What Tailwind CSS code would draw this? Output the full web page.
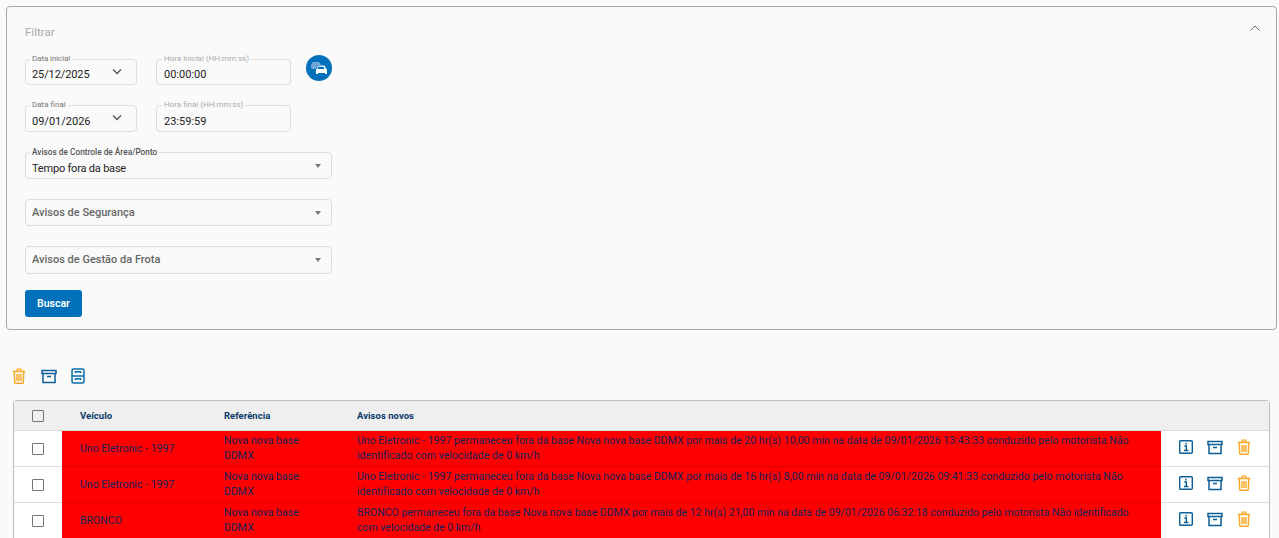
<!DOCTYPE html>
<html lang="pt-BR">
  <head>
    <meta charset="UTF-8" />
    <meta name="viewport" content="width=device-width, initial-scale=1.0" />
    <title>Avisos</title>
    <script src="https://cdn.jsdelivr.net/npm/@tailwindcss/browser@4"></script>
  </head>
  <body class="bg-[#fafafa] font-['Roboto',sans-serif]">
    <div class="h-[538px] overflow-hidden px-[6px] pt-[6px]">
      <!-- filtro -->
      <section class="relative w-[1271px] h-[324px] rounded-[4px] border border-[#a8a8a8] pl-[18px] pt-[18px]">
        <div class="h-[14px] mb-[20px] text-[11.5px] leading-[14px] text-[#a9a9a9]">Filtrar</div>
        <svg class="absolute right-[15px] top-[16px] w-[12px] h-[10px]" viewBox="0 0 12 10" fill="none" stroke="#666" stroke-width="1"><path d="M1.500 7.500 6 3l4.500 4.500" /></svg>

        <div class="flex mb-[20px]">
          <div class="relative flex items-center justify-between w-[112px] h-[26px] rounded-[4px] border border-[#dcdcdc] pl-[6px] pr-[14px] pt-[7px] text-[11px] tracking-[-0.1px] text-[#222]">
            <span class="absolute left-[4px] -top-[6px] bg-[#fafafa] px-[2px] text-[8px] leading-[10px] text-[#777]">Data inicial</span>
            <span>25/12/2025</span>
            <svg class="w-[10px] h-[7px] -mt-[9px]" viewBox="0 0 10 7" fill="none" stroke="#555" stroke-width="1.300"><path d="m1 1.500 4 4 4-4" /></svg>
          </div>
          <div class="relative flex items-center w-[135px] h-[26px] ml-[19px] rounded-[4px] border border-[#dcdcdc] pl-[7px] pt-[7px] text-[11px] text-[#222]">
            <span class="absolute left-[5px] -top-[6px] bg-[#fafafa] px-[2px] text-[8px] leading-[10px] text-[#aaa]">Hora inicial (HH:mm:ss)</span>
            <span>00:00:00</span>
          </div>
          <button class="flex items-center justify-center w-[26px] h-[26px] ml-[15px] -mt-[4px] rounded-full bg-[#0070bb]">
            <svg class="w-[18px] h-[14px]" viewBox="0 0 18 14">
              <path fill="#6fa8d6" d="M3 1h5.500c.8 0 1.400.4 1.700 1.200l.6 1.800H8L6 8H2.500C1.700 8 1 7.300 1 6.500V4.200c0-.6.300-1 .8-1.300L2 2c.2-.6.600-1 1-1Z" />
              <path fill="#fff" fill-rule="evenodd" d="M8 4.500h6c.5 0 .9.300 1.100.8l.9 2.500c.6.200 1 .8 1 1.400V13h-2v-1H8v1H6V9.200c0-.6.400-1.200 1-1.400l.9-2.500c.2-.5.600-.8 1.100-.8Zm.3 1.200L7.700 8h6.600l-.6-2.300H8.300Z" />
            </svg>
          </button>
        </div>

        <div class="flex mb-[20px]">
          <div class="relative flex items-center justify-between w-[112px] h-[27px] rounded-[4px] border border-[#dcdcdc] pl-[6px] pr-[14px] pt-[7px] text-[11px] text-[#222]">
            <span class="absolute left-[4px] -top-[6px] bg-[#fafafa] px-[2px] text-[8px] leading-[10px] text-[#777]">Data final</span>
            <span>09/01/2026</span>
            <svg class="w-[10px] h-[7px] -mt-[9px]" viewBox="0 0 10 7" fill="none" stroke="#555" stroke-width="1.300"><path d="m1 1.500 4 4 4-4" /></svg>
          </div>
          <div class="relative flex items-center w-[135px] h-[27px] ml-[19px] rounded-[4px] border border-[#dcdcdc] pl-[7px] pt-[7px] text-[11px] text-[#222]">
            <span class="absolute left-[5px] -top-[6px] bg-[#fafafa] px-[2px] text-[8px] leading-[10px] text-[#aaa]">Hora final (HH:mm:ss)</span>
            <span>23:59:59</span>
          </div>
        </div>

        <div class="relative flex items-center justify-between w-[307px] h-[27px] mb-[20px] rounded-[4px] border border-[#dcdcdc] pl-[6px] pr-[10px] pt-[7px] text-[11px] text-[#222]">
          <span class="absolute left-[4px] -top-[6px] bg-[#fafafa] px-[2px] text-[8.300px] font-medium leading-[10px] text-[#555]">Avisos de Controle de Área/Ponto</span>
          <span class="tracking-[-0.2px]">Tempo fora da base</span>
          <span class="w-0 h-0 -mt-[7px] border-x-[3.500px] border-x-transparent border-t-[4px] border-t-[#777]"></span>
        </div>
        <div class="flex items-center justify-between w-[307px] h-[27px] mb-[20px] rounded-[4px] border border-[#dcdcdc] pl-[6px] pr-[10px] pt-[2px] text-[11px] font-medium text-[#666]">
          <span>Avisos de Segurança</span>
          <span class="w-0 h-0 -mt-[2px] border-x-[3.500px] border-x-transparent border-t-[4px] border-t-[#777]"></span>
        </div>
        <div class="flex items-center justify-between w-[307px] h-[28px] mb-[16px] rounded-[4px] border border-[#dcdcdc] pl-[6px] pr-[10px] text-[11px] font-medium text-[#666]">
          <span>Avisos de Gestão da Frota</span>
          <span class="w-0 h-0 border-x-[3.500px] border-x-transparent border-t-[4px] border-t-[#777]"></span>
        </div>
        <button class="w-[57px] h-[27px] rounded-[3px] bg-[#0070bb] text-[10.500px] font-semibold text-white">Buscar</button>
      </section>

      <!-- acoes em lote -->
      <div class="flex items-center h-[18px] mt-[37px] mb-[15px] pl-[6px]">
        <svg class="w-[14px] h-[16px]" viewBox="0 0 14 16" fill="none" stroke="#f9a825" stroke-width="1.400"><path d="M.8 3.500h12.400M4.500 3.500l.8-2.400h3.400l.8 2.400M2.200 3.500l.5 11c0 .4.300.8.800.8h7c.5 0 .8-.4.800-.8l.5-11M5 6v7M7 6v7M9 6v7" /></svg>
        <svg class="w-[16px] h-[15px] ml-[15px]" viewBox="0 0 16 15" fill="none" stroke="#0b5f96" stroke-width="1.500"><path d="M1 1.500h14v3H1zM2 4.500v9h12v-9M6 7.500h4" /></svg>
        <svg class="w-[14px] h-[16px] ml-[14px]" viewBox="0 0 14 16" fill="none" stroke="#0b6fa8" stroke-width="1.500"><rect x="1" y="1" width="12" height="14" rx="1.500" /><path d="M1 8h12M4.500 5V3.800h5V5M4.500 12v-1.200h5V12" /></svg>
      </div>

      <!-- tabela -->
      <div class="w-[1257px] ml-[7px] rounded-t-[4px] border border-b-0 border-[#bdbdbd] bg-white">
        <table class="w-full table-fixed border-collapse text-[10.500px] leading-[15px] tracking-[0.035px] text-[#12205c]">
          <colgroup>
            <col class="w-[48px]" />
            <col class="w-[144px]" />
            <col class="w-[133px]" />
            <col />
            <col class="w-[108px]" />
          </colgroup>
          <thead>
            <tr class="h-[29px] bg-[#efefef] border-b border-[#dadada] text-left text-[9.500px] font-bold text-[#0b3a6b]">
              <th class="text-center"><span class="inline-block w-[12px] h-[12px] align-middle rounded-[1px] border border-[#757575] bg-transparent"></span></th>
              <th class="pl-[18px]">Veículo</th>
              <th class="pl-[18px]">Referência</th>
              <th class="pl-[18px]">Avisos novos</th>
              <th></th>
            </tr>
          </thead>
          <tbody>
            <tr class="h-[36px] border-b border-[#dedede]">
              <td class="text-center"><span class="inline-block w-[12px] h-[12px] align-middle rounded-[1px] border border-[#757575]"></span></td>
              <td class="bg-[#ff0000] pl-[18px] border-b border-[#e00000]">Uno Eletronic - 1997</td>
              <td class="bg-[#ff0000] pl-[18px] border-b border-[#e00000]">Nova nova base<br />DDMX</td>
              <td class="bg-[#ff0000] pl-[18px] pr-[20px] border-b border-[#e00000]">Uno Eletronic - 1997 permaneceu fora da base Nova nova base DDMX por mais de 20 hr(s) 10,00 min na data de 09/01/2026 13:43:33 conduzido pelo motorista Não identificado com velocidade de 0 km/h</td>
              <td>
                <div class="flex items-center pl-[18px] pb-[2px]">
                  <svg class="w-[14px] h-[14px]" viewBox="0 0 14 14" fill="none" stroke="#0b5f96" stroke-width="1.400"><rect x=".7" y=".7" width="12.600" height="12.600" rx="1" /><path d="M7 2.800v1.600M5.300 6H7.300v4.500M5 10.500h4.500" /></svg>
                  <svg class="w-[16px] h-[15px] ml-[14px]" viewBox="0 0 16 15" fill="none" stroke="#0b5f96" stroke-width="1.500"><path d="M1 1.500h14v3H1zM2 4.500v9h12v-9M6 7.500h4" /></svg>
                  <svg class="w-[14px] h-[16px] ml-[14px]" viewBox="0 0 14 16" fill="none" stroke="#f9a825" stroke-width="1.400"><path d="M.8 3.500h12.400M4.500 3.500l.8-2.400h3.400l.8 2.400M2.200 3.500l.5 11c0 .4.300.8.800.8h7c.5 0 .8-.4.800-.8l.5-11M5 6v7M7 6v7M9 6v7" /></svg>
                </div>
              </td>
            </tr>
            <tr class="h-[36px] border-b border-[#dedede]">
              <td class="text-center"><span class="inline-block w-[12px] h-[12px] align-middle rounded-[1px] border border-[#757575]"></span></td>
              <td class="bg-[#ff0000] pl-[18px] border-b border-[#e00000]">Uno Eletronic - 1997</td>
              <td class="bg-[#ff0000] pl-[18px] border-b border-[#e00000]">Nova nova base<br />DDMX</td>
              <td class="bg-[#ff0000] pl-[18px] pr-[20px] border-b border-[#e00000]">Uno Eletronic - 1997 permaneceu fora da base Nova nova base DDMX por mais de 16 hr(s) 8,00 min na data de 09/01/2026 09:41:33 conduzido pelo motorista Não identificado com velocidade de 0 km/h</td>
              <td>
                <div class="flex items-center pl-[18px] pb-[2px]">
                  <svg class="w-[14px] h-[14px]" viewBox="0 0 14 14" fill="none" stroke="#0b5f96" stroke-width="1.400"><rect x=".7" y=".7" width="12.600" height="12.600" rx="1" /><path d="M7 2.800v1.600M5.300 6H7.300v4.500M5 10.500h4.500" /></svg>
                  <svg class="w-[16px] h-[15px] ml-[14px]" viewBox="0 0 16 15" fill="none" stroke="#0b5f96" stroke-width="1.500"><path d="M1 1.500h14v3H1zM2 4.500v9h12v-9M6 7.500h4" /></svg>
                  <svg class="w-[14px] h-[16px] ml-[14px]" viewBox="0 0 14 16" fill="none" stroke="#f9a825" stroke-width="1.400"><path d="M.8 3.500h12.400M4.500 3.500l.8-2.400h3.400l.8 2.400M2.200 3.500l.5 11c0 .4.300.8.800.8h7c.5 0 .8-.4.800-.8l.5-11M5 6v7M7 6v7M9 6v7" /></svg>
                </div>
              </td>
            </tr>
            <tr class="h-[36px] border-b border-[#dedede]">
              <td class="text-center"><span class="inline-block w-[12px] h-[12px] align-middle rounded-[1px] border border-[#757575]"></span></td>
              <td class="bg-[#ff0000] pl-[18px]">BRONCO</td>
              <td class="bg-[#ff0000] pl-[18px]">Nova nova base<br />DDMX</td>
              <td class="bg-[#ff0000] pl-[18px] pr-[20px] tracking-[0px]">BRONCO permaneceu fora da base Nova nova base DDMX por mais de 12 hr(s) 21,00 min na data de 09/01/2026 06:32:18 conduzido pelo motorista Não identificado com velocidade de 0 km/h</td>
              <td>
                <div class="flex items-center pl-[18px] pb-[2px]">
                  <svg class="w-[14px] h-[14px]" viewBox="0 0 14 14" fill="none" stroke="#0b5f96" stroke-width="1.400"><rect x=".7" y=".7" width="12.600" height="12.600" rx="1" /><path d="M7 2.800v1.600M5.300 6H7.300v4.500M5 10.500h4.500" /></svg>
                  <svg class="w-[16px] h-[15px] ml-[14px]" viewBox="0 0 16 15" fill="none" stroke="#0b5f96" stroke-width="1.500"><path d="M1 1.500h14v3H1zM2 4.500v9h12v-9M6 7.500h4" /></svg>
                  <svg class="w-[14px] h-[16px] ml-[14px]" viewBox="0 0 14 16" fill="none" stroke="#f9a825" stroke-width="1.400"><path d="M.8 3.500h12.400M4.500 3.500l.8-2.400h3.400l.8 2.400M2.200 3.500l.5 11c0 .4.300.8.800.8h7c.5 0 .8-.4.800-.8l.5-11M5 6v7M7 6v7M9 6v7" /></svg>
                </div>
              </td>
            </tr>
          </tbody>
        </table>
      </div>
    </div>
  </body>
</html>
